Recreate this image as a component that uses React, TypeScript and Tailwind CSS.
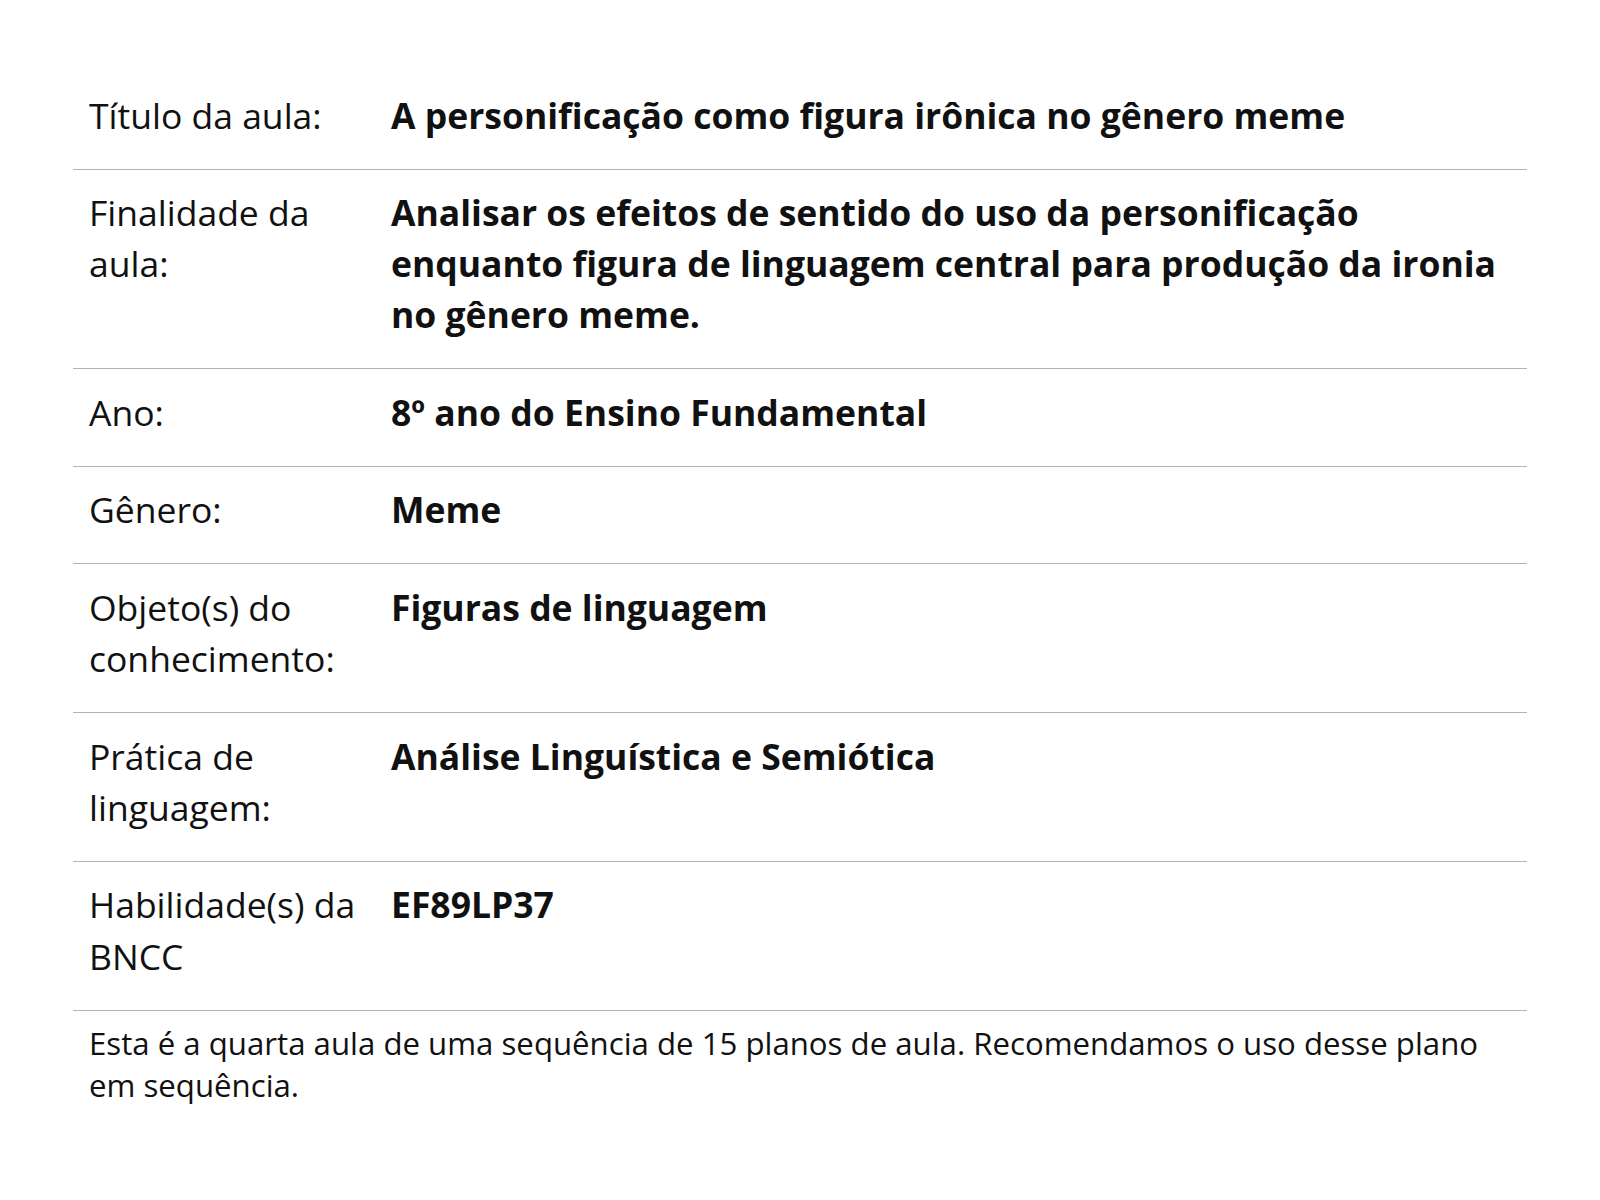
const rows: { label: string; value: string }[] = [
  { label: 'Título da aula:', value: 'A personificação como figura irônica no gênero meme' },
  {
    label: 'Finalidade da aula:',
    value:
      'Analisar os efeitos de sentido do uso da personificação enquanto figura de linguagem central para produção da ironia no gênero meme.',
  },
  { label: 'Ano:', value: '8º ano do Ensino Fundamental' },
  { label: 'Gênero:', value: 'Meme' },
  { label: 'Objeto(s) do conhecimento:', value: 'Figuras de linguagem' },
  { label: 'Prática de linguagem:', value: 'Análise Linguística e Semiótica' },
  { label: 'Habilidade(s) da BNCC', value: 'EF89LP37' },
];

export default function App() {
  return (
    <div
      className="min-h-screen w-full bg-white px-[73px] pt-[72px] text-[#111]"
      style={{ fontFamily: '"Open Sans", "Noto Sans", sans-serif' }}
    >
      <div className="w-[1454px]">
        {rows.map((row) => (
          <div
            key={row.label}
            className="grid grid-cols-[302px_1fr] border-b border-[#b3b3b3] pt-[17.5px] pb-[27.8px] text-[35.5px] leading-[51.2px]"
          >
            <div className="px-4">{row.label}</div>
            <div className="px-4 font-bold">{row.value}</div>
          </div>
        ))}
        <p className="px-4 pt-[11px] text-[31.2px] leading-[42.5px]">
          Esta é a quarta aula de uma sequência de 15 planos de aula. Recomendamos o uso desse plano em sequência.
        </p>
      </div>
    </div>
  );
}
